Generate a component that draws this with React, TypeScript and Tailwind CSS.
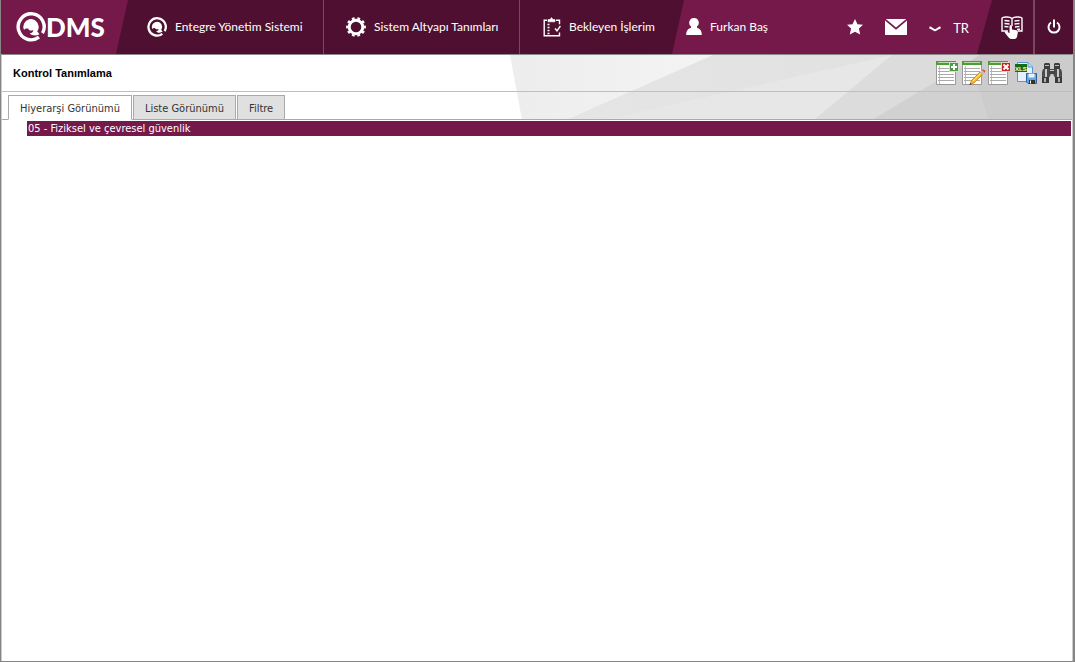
import React from 'react';

interface IconProps {
  className?: string;
}

const QMark: React.FC<IconProps> = ({ className }) => (
  <svg viewBox="0 0 30 30" className={className} aria-hidden="true">
    <path d="M23 25.200A13 13 0 1 1 26.500 21.200" fill="none" stroke="currentColor" strokeWidth="3.400" />
    <path
      d="M8 18A7.700 7.700 0 1 1 22.700 14.500c0 2-.5 3.500-1.500 4.800l2.300 2.900c-3.300 1.900-7.700 1.700-9.800-1 2.300 0 3.700-1.200 3.600-3.200-2.200 1-4.300.6-5-1.300-1.500-.4-3.200 0-4.300 1.300z"
      fill="currentColor"
    />
  </svg>
);

const GearIcon: React.FC<IconProps> = ({ className }) => (
  <svg viewBox="0 0 20 20" className={className} fill="none" stroke="currentColor" aria-hidden="true">
    <circle cx="10" cy="10" r="6.800" strokeWidth="3" />
    <circle cx="10" cy="10" r="8.800" strokeWidth="2.200" pathLength="80" strokeDasharray="4 4" strokeDashoffset="2" />
  </svg>
);

const TaskIcon: React.FC<IconProps> = ({ className }) => (
  <svg viewBox="0 0 18 20" className={className} fill="none" stroke="currentColor" strokeWidth="1.400" aria-hidden="true">
    <path d="M4 3.200H1.200v15.600h15.300V15.500M13 3.200h3.500v4" />
    <path d="M5 4.800V2.600h2L8.500.6l1.500 2h2v2.200z" fill="currentColor" strokeWidth=".6" />
    <path d="M4.500 7.500h2M4.500 10.500h2M4.500 13.500h2M4.500 16.500h2" strokeWidth="1.600" />
    <path d="M12 11.500l2 2.300L17.400 9" />
  </svg>
);

const UserIcon: React.FC<IconProps> = ({ className }) => (
  <svg viewBox="0 0 16 18" className={className} fill="currentColor" aria-hidden="true">
    <path d="M8 0a4.500 4.800 0 0 1 3 8.600v1.200c2.800.9 4.800 2.600 4.800 7.200H.2c0-4.600 2-6.300 4.800-7.200V8.600A4.500 4.800 0 0 1 8 0z" />
  </svg>
);

const StarIcon: React.FC<IconProps> = ({ className }) => (
  <svg viewBox="0 0 16 16" className={className} fill="currentColor" aria-hidden="true">
    <path d="M8 0l2.500 5.200 5.500.5-4.100 3.900L13.200 15.600 8 12.800l-5.200 2.800 1.300-6L0 5.700l5.500-.5z" />
  </svg>
);

const MailIcon: React.FC<IconProps> = ({ className }) => (
  <svg viewBox="0 0 22 16" className={className} fill="currentColor" aria-hidden="true">
    <path d="M.8 0h20.400L11 8.500z" />
    <path d="M0 1.500l11 9.200 11-9.200V16H0z" />
  </svg>
);

const ChevronIcon: React.FC<IconProps> = ({ className }) => (
  <svg viewBox="0 0 12 6" className={className} fill="none" stroke="currentColor" strokeWidth="2" aria-hidden="true">
    <path d="M.5 1.200C3 2.200 4.500 3.800 6 4.200 7.500 3.800 9 2.200 11.500 1.200" />
  </svg>
);

const GuideIcon: React.FC<IconProps> = ({ className }) => (
  <svg viewBox="0 0 22 23" className={className} fill="none" stroke="currentColor" aria-hidden="true">
    <path d="M7 15H1V2.500C1 1 8.500 0 11 2.500 13.500 0 21 1 21 2.500V15h-4M11 2.500V10" strokeWidth="1.400" />
    <path d="M3.500 4.500l5 .5M3.500 7.500l5 .5M3.500 10.500l4 .4M13.500 5l5-.5M13.500 8l5-.5M14 11l4.500-.5M16 13.500l3-.3" strokeWidth="1.400" />
    <path d="M8.500 10.500c0-1.600 2.400-1.600 2.400 0v3l4.600.8c1 .3 1.500 1 1.400 2l-.8 4.200c-.3 1.500-1.200 2.500-2.600 2.500H10c-1 0-1.600-.5-2.300-1.400L3.800 16.800c-.3-1.500 1.500-1.800 2.500-1l2.200 1.500z" fill="currentColor" stroke="none" />
  </svg>
);

const PowerIcon: React.FC<IconProps> = ({ className }) => (
  <svg viewBox="0 0 14 16" className={className} fill="none" stroke="currentColor" strokeWidth="2" aria-hidden="true">
    <path d="M4 3.500a5.500 5.500 0 1 0 6 0M7 .5v8" />
  </svg>
);

const FormSheet: React.FC = () => (
  <>
    <path d="M.5 1h19v22.500H.5z" fill="#fff" stroke="#999" />
    <path d="M0 0h20v4H0z" fill="#4c9e34" />
    <path d="M2 1.500h16" stroke="#b7dda2" />
    <path d="M3.500 5v18" stroke="#eda7a0" />
    <path d="M2 7.500h16M2 10.500h16M2 13.500h16M2 16.500h16M2 19.500h16" stroke="#aaa" />
  </>
);

const AddRecordIcon: React.FC = () => (
  <svg viewBox="0 0 24 24" className="size-6" aria-hidden="true">
    <FormSheet />
    <path d="M13.500 1.500h9v9h-9z" fill="#4f9a48" stroke="#d5dcd5" />
    <path d="M18 3v6M15 6h6" stroke="#fff" strokeWidth="2" />
  </svg>
);

const EditRecordIcon: React.FC = () => (
  <svg viewBox="0 0 24 24" className="size-6" aria-hidden="true">
    <FormSheet />
    <path d="M8 23.500l1.500-4L18 11l2.500 2.500-8.500 8.500z" fill="#f5bd36" stroke="#bf7d18" strokeWidth=".8" />
    <path d="M11 20l8-8" stroke="#ffe48b" />
    <path d="M18 11l2-2 2.500 2.500-2 2z" fill="#bbc3cb" />
    <path d="M20 9c1.500-1.500 4.500 1 2.700 2.700z" fill="#dc4941" />
    <path d="M7.500 24l.8-2 1.300 1.200z" fill="#333" />
  </svg>
);

const DeleteRecordIcon: React.FC = () => (
  <svg viewBox="0 0 24 24" className="size-6" aria-hidden="true">
    <FormSheet />
    <path d="M13.500 1.500h9v9h-9z" fill="#cf2020" stroke="#e8d0d0" />
    <path d="M15.500 3.500l5 5M20.500 3.500l-5 5" stroke="#fff" strokeWidth="2" />
  </svg>
);

const ExcelIcon: React.FC = () => (
  <svg viewBox="0 0 24 24" className="size-6" aria-hidden="true">
    <path d="M3.500 1.500H14l4.500 4.500v14.500h-15z" fill="#e4f0fc" stroke="#5c96d2" />
    <path d="M14 1.500V6h4.500" fill="#b9d8f5" stroke="#5c96d2" />
    <path d="M1 3h12v8H1z" fill="#176b17" />
    <text x="1" y="9.500" fill="#f0ffdf" fontSize="6" fontWeight="700" fontFamily="Liberation Sans, sans-serif">XLS</text>
    <path d="M12.500 12.500h10v10h-8.500l-1.500-1.500z" fill="#6aa6de" stroke="#2b609b" />
    <path d="M14.500 12.500h6v4h-6z" fill="#eaf4ff" />
    <path d="M15 19h6v4h-6z" fill="#333" />
    <path d="M16.500 19.500v3" stroke="#fff" />
  </svg>
);

const SearchIcon: React.FC = () => (
  <svg viewBox="0 0 24 24" className="size-6" aria-hidden="true">
    <path d="M4 3l1-1h4l1 1v5H4zM14 3l1-1h4l1 1v5h-6z" fill="#3d3d3d" />
    <path d="M5 4.500h4M15 4.500h4" stroke="#bbb" />
    <path d="M3 8h7.500v6l-1 2H2v-5zM13.500 8H21l1 3v5h-7.500l-1-2z" fill="#4c4c4c" />
    <path d="M6 8v8M18 8v8" stroke="#c8c8c8" strokeWidth="2" />
    <path d="M9 8h6v5H9z" fill="#444" />
    <path d="M10 9.500h4" stroke="#ccc" />
    <path d="M2 16h7v6H2zM15 16h7v6h-7z" fill="#3a3a3a" />
    <path d="M5 17v4M19 17v4" stroke="#b0b0b0" strokeWidth="2" />
  </svg>
);

const menuItems = [
  { label: 'Entegre Yönetim Sistemi', icon: <QMark className="size-5" />, className: 'w-[208px] border-r pl-[31px]' },
  { label: 'Sistem Altyapı Tanımları', icon: <GearIcon className="size-5" />, className: 'w-[196px] border-r pl-[22px]' },
  { label: 'Bekleyen İşlerim', icon: <TaskIcon className="h-5 w-[18px]" />, className: 'w-[164px] pl-[23px]' },
];

const actions = [
  { label: 'Ekle', icon: <AddRecordIcon /> },
  { label: 'Düzenle', icon: <EditRecordIcon /> },
  { label: 'Sil', icon: <DeleteRecordIcon /> },
  { label: 'Excel', icon: <ExcelIcon /> },
  { label: 'Ara', icon: <SearchIcon /> },
];

const tabs = [
  { label: 'Hiyerarşi Görünümü', active: true },
  { label: 'Liste Görünümü', active: false },
  { label: 'Filtre', active: false },
];

const Header: React.FC = () => (
  <header className="flex h-[54px] bg-[#75184a] font-['Lato',sans-serif] text-xs text-white">
    <a href="#" aria-label="QDMS" className="flex w-[115px] shrink-0 items-center pl-[15px]">
      <QMark className="size-[30px]" />
      <span className="text-[26px] leading-[30px] font-black">DMS</span>
    </a>
    <nav className="flex shrink-0 bg-[#4f0f30] [clip-path:polygon(12px_0,100%_0,calc(100%-12px)_100%,0_100%)]">
      {menuItems.map((item) => (
        <a key={item.label} href="#" className={`flex items-center gap-2 border-[#7b4663] whitespace-nowrap ${item.className}`}>
          {item.icon}
          {item.label}
        </a>
      ))}
    </nav>
    <a href="#" className="flex items-center gap-2 pl-[2px] whitespace-nowrap">
      <UserIcon className="h-[18px] w-4" />
      Furkan Baş
    </a>
    <div className="ml-auto flex items-center gap-[22px] pr-2">
      <button type="button" aria-label="Favoriler">
        <StarIcon className="size-4" />
      </button>
      <button type="button" aria-label="Mesajlar">
        <MailIcon className="h-4 w-[22px]" />
      </button>
      <button type="button" className="flex items-center gap-3 pt-1 text-[13px]">
        <ChevronIcon className="h-[6px] w-3" />
        TR
      </button>
    </div>
    <div className="flex shrink-0 bg-[#4f0f30] [clip-path:polygon(15px_0,100%_0,100%_100%,0_100%)]">
      <button type="button" aria-label="Yardım" className="w-[58px] border-r-2 border-[#7b4663] pl-6">
        <GuideIcon className="h-[23px] w-[22px]" />
      </button>
      <button type="button" aria-label="Çıkış" className="flex w-[38px] items-center justify-center">
        <PowerIcon className="h-4 w-[14px]" />
      </button>
    </div>
  </header>
);

const Backdrop: React.FC = () => (
  <svg viewBox="0 0 1070 64" preserveAspectRatio="none" className="absolute inset-0 size-full" aria-hidden="true">
    <defs>
      <linearGradient id="sheen">
        <stop offset="0" stopColor="#ededed" />
        <stop offset="1" stopColor="#f4f4f4" />
      </linearGradient>
      <linearGradient id="shade">
        <stop offset="0" stopColor="#e5e5e5" />
        <stop offset="1" stopColor="#dfdfdf" />
      </linearGradient>
    </defs>
    <path d="M508 0h210L570 64H520z" fill="url(#sheen)" />
    <path d="M711 0h359v64H564z" fill="url(#shade)" />
    <path d="M890 0L812 64H602z" fill="#e7e7e7" />
    <path d="M890 0h180v64H812z" fill="#dcdcdc" />
    <path d="M978 0h92v64H870z" fill="#d1d1d1" />
    <path d="M968 6l10-6h92v64h-83z" fill="#cccccc" />
  </svg>
);

const App: React.FC = () => (
  <div className="flex min-h-screen flex-col border-r-2 border-b border-l border-[#858585] bg-white font-['DejaVu_Sans_Condensed','DejaVu_Sans',sans-serif] text-[11px] leading-[15px] text-[#333]">
    <Header />
    <main className="flex-1 border-t border-r border-l border-t-[#8a8a8a] border-r-[#ccc] border-l-[#ccc]">
      <div className="relative">
        <Backdrop />
        <div className="relative flex h-[37px] items-center justify-between border-b border-[#bfbfbf] pr-2 pl-[11px]">
          <h1 className="font-['Liberation_Sans',sans-serif] font-bold text-black">Kontrol Tanımlama</h1>
          <div className="flex gap-[2px]">
            {actions.map((action) => (
              <button key={action.label} type="button" aria-label={action.label}>
                {action.icon}
              </button>
            ))}
          </div>
        </div>
        <div role="tablist" className="relative flex h-7 items-end border-b border-[#aaa] pl-[6px]">
          {tabs.map((tab) => (
            <button
              key={tab.label}
              type="button"
              role="tab"
              aria-selected={tab.active}
              className={`mr-px border border-[#aaa] px-[11px] pt-px whitespace-nowrap ${
                tab.active ? '-mb-px h-[25px] border-b-white bg-white' : 'h-6 border-b-0 bg-[#e0e0e0]'
              }`}
            >
              {tab.label}
            </button>
          ))}
        </div>
      </div>
      <ul role="tree" className="pt-px pr-px pl-[25px]">
        <li role="treeitem" aria-selected="true" className="bg-[#75184a] pl-px text-white">
          05 - Fiziksel ve çevresel güvenlik
        </li>
      </ul>
    </main>
  </div>
);

export default App;
